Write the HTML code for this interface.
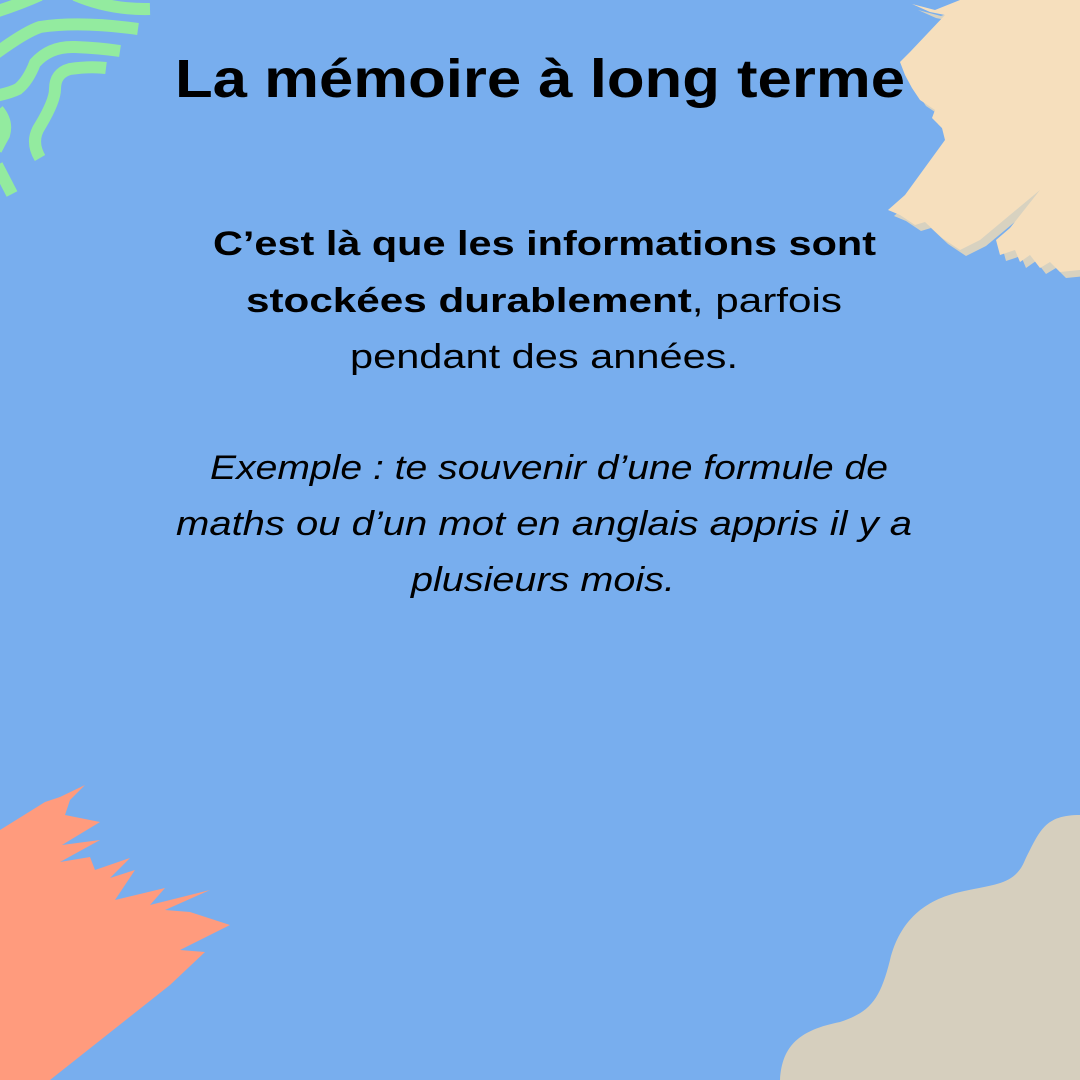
<!DOCTYPE html>
<html><head><meta charset="utf-8"><style>
html,body{margin:0;padding:0;width:1080px;height:1080px;overflow:hidden;background:#78aeee}
svg{display:block}
</style></head><body>
<svg width="1080" height="1080" viewBox="0 0 1080 1080" xmlns="http://www.w3.org/2000/svg">
<rect width="1080" height="1080" fill="#78aeee"/>
<g fill="none" stroke="#93eb9f" stroke-width="12" stroke-linecap="butt">
<path d="M-5 12 Q20 4 40 -5"/>
<path d="M75 -5 Q110 10 150 9"/>
<path d="M-5 54 Q25 32 40 27 Q80 21 138 29"/>
<path d="M-5 96 Q10 93 18 89 Q28 81 35 63 Q50 46 75 47 Q100 48 120 51"/>
<path d="M40 158 Q30 141 40 126 Q55 101 55 89 Q55 73 70 69 Q90 66 106 68"/>
<path d="M-2 110 Q8 122 4 135 Q0 142 -4 150"/>
<path d="M-3 165 L12 194"/>
</g>
<g>
<path transform="translate(6,6)" fill="#d8d2c0" d="M912 4 L935 10 L960 0 L1080 0 L1080 270 L1060 272 L1050 262 L1040 268 L1030 255 L1020 262 L1015 250 L1000 255 L996 240 L1010 228 L1040 190 L980 240 L960 250 L942 238 L925 222 L915 225 L900 215 L888 210 L905 195 L945 140 L942 128 L932 118 L935 110 L920 100 L912 88 L905 75 L900 62 L910 52 L945 15 L930 12 Z"/>
<path fill="#f6dfbd" d="M912 4 L935 10 L960 0 L1080 0 L1080 270 L1060 272 L1050 262 L1040 268 L1030 255 L1020 262 L1015 250 L1000 255 L996 240 L1010 228 L1040 190 L980 240 L960 250 L942 238 L925 222 L915 225 L900 215 L888 210 L905 195 L945 140 L942 128 L932 118 L935 110 L920 100 L912 88 L905 75 L900 62 L910 52 L945 15 L930 12 Z"/>
</g>
<path fill="#ff9b7d" d="M0 830 L45 802 L60 797 L85 785 L70 800 L65 815 L100 822 L62 845 L100 840 L60 862 L90 857 L95 870 L130 858 L110 878 L135 870 L115 900 L165 888 L150 905 L210 890 L165 910 L190 912 L230 925 L180 950 L205 952 L170 985 L50 1080 L0 1080 Z"/>
<path fill="#d6cfbe" d="M780 1080 C782 1045 800 1030 840 1022 C870 1012 880 1000 890 960 C900 920 925 900 960 892 C995 884 1015 885 1025 860 C1040 830 1045 815 1080 815 L1080 1080 Z"/>
<g font-family="'Liberation Sans', sans-serif" fill="#000" text-anchor="middle">
<text x="540" y="97" font-size="54" font-weight="bold" textLength="730" lengthAdjust="spacingAndGlyphs">La mémoire à long terme</text>
<text x="544.5" y="255" font-size="34" font-weight="bold" textLength="663" lengthAdjust="spacingAndGlyphs">C’est là que les informations sont</text>
<text x="544" y="312" font-size="34" textLength="596" lengthAdjust="spacingAndGlyphs"><tspan font-weight="bold">stockées durablement</tspan>, parfois</text>
<text x="544" y="368" font-size="34" textLength="388" lengthAdjust="spacingAndGlyphs">pendant des années.</text>
<text x="549" y="479" font-size="34" font-style="italic" textLength="678" lengthAdjust="spacingAndGlyphs">Exemple : te souvenir d’une formule de</text>
<text x="544" y="535" font-size="34" font-style="italic" textLength="736" lengthAdjust="spacingAndGlyphs">maths ou d’un mot en anglais appris il y a</text>
<text x="543" y="591" font-size="34" font-style="italic" textLength="264" lengthAdjust="spacingAndGlyphs">plusieurs mois.</text>
</g>
</svg>
</body></html>
